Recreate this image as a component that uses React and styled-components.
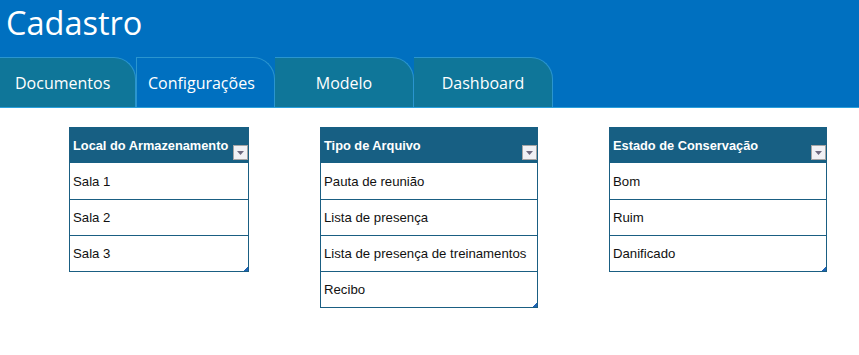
import React from "react"
import styled, { createGlobalStyle } from "styled-components"

const Global = createGlobalStyle`
  body {
    margin: 0;
    background: #ffffff;
    font-family: "Liberation Sans", Arial, sans-serif;
  }
`

const tabs = [
  { label: "Documentos", active: false },
  { label: "Configurações", active: true },
  { label: "Modelo", active: false },
  { label: "Dashboard", active: false },
]

const lists = [
  { title: "Local do Armazenamento", width: 180, items: ["Sala 1", "Sala 2", "Sala 3"] },
  {
    title: "Tipo de Arquivo",
    width: 218,
    items: ["Pauta de reunião", "Lista de presença", "Lista de presença de treinamentos", "Recibo"],
  },
  { title: "Estado de Conservação", width: 218, items: ["Bom", "Ruim", "Danificado"] },
]

const App = () => {
  return (
    <>
      <Global />
      <Header>
        <Title>Cadastro</Title>
        <TabBar>
          {tabs.map((t) => (
            <Tab key={t.label} $active={t.active}>
              {t.label}
            </Tab>
          ))}
        </TabBar>
      </Header>
      <Tables>
        {lists.map((l) => (
          <Table key={l.title} $width={l.width}>
            <HeadCell>
              <span>{l.title}</span>
              <Filter>
                <svg width="7" height="4" viewBox="0 0 7 4">
                  <path d="M0 0 L7 0 L3.5 4 Z" fill="#6f6a80" />
                </svg>
              </Filter>
            </HeadCell>
            {l.items.map((it) => (
              <Row key={it}>{it}</Row>
            ))}
            <Grip />
          </Table>
        ))}
      </Tables>
    </>
  )
}
export default App

const Header = styled.div`
  background: #0070c0;
  height: 108px;
  display: flex;
  flex-direction: column;
  justify-content: space-between;
  box-sizing: border-box;
  border-bottom: 1px solid #2aa0dc;
`

const Title = styled.div`
  color: #ffffff;
  font-family: "Open Sans", "Noto Sans", sans-serif;
  font-size: 32.5px;
  line-height: 46px;
  padding-left: 6px;
`

const TabBar = styled.div`
  display: flex;
  height: 50px;
`

const Tab = styled.div`
  width: 139px;
  height: 50px;
  box-sizing: border-box;
  display: flex;
  align-items: center;
  justify-content: ${(p) => (p.$active ? "flex-start" : "center")};
  padding-left: ${(p) => (p.$active ? "11px" : "0")};
  background: ${(p) => (p.$active ? "#0070c0" : "#0f7699")};
  border-top: 1px solid #2a95cf;
  border-right: 1px solid #2a95cf;
  border-left: ${(p) => (p.$active ? "1px solid #2a95cf" : "none")};
  border-top-right-radius: 22px;
  color: #ffffff;
  font-family: "Open Sans", "Noto Sans", sans-serif;
  font-size: 16px;
  &:first-child {
    justify-content: flex-start;
    padding-left: 15px;
    width: 136px;
  }
`

const Tables = styled.div`
  display: flex;
  align-items: flex-start;
  gap: 71px;
  padding: 19px 0 0 69px;
`

const Table = styled.div`
  position: relative;
  width: ${(p) => p.$width}px;
  border: 1px solid #1a5e82;
  border-top: none;
  box-sizing: border-box;
`

const HeadCell = styled.div`
  background: #175f83;
  height: 36px;
  display: flex;
  justify-content: space-between;
  align-items: flex-start;
  padding-left: 3px;
  color: #ffffff;
  font-weight: bold;
  font-size: 12.8px;
  span {
    padding-top: 11px;
  }
`

const Filter = styled.div`
  width: 15px;
  height: 15px;
  margin-top: 18px;
  box-sizing: border-box;
  background: #f1f1f5;
  border: 1px solid #a5a5a5;
  display: flex;
  align-items: center;
  justify-content: center;
`

const Row = styled.div`
  height: 36px;
  box-sizing: border-box;
  border-top: 1px solid #1a5e82;
  display: flex;
  align-items: center;
  padding-left: 3px;
  color: #111111;
  font-size: 13.2px;
  &:nth-child(2) {
    border-top: none;
  }
`

const Grip = styled.div`
  position: absolute;
  right: 0;
  bottom: 0;
  width: 4px;
  height: 4px;
  background: linear-gradient(135deg, transparent 50%, #1f64b5 50%);
`
